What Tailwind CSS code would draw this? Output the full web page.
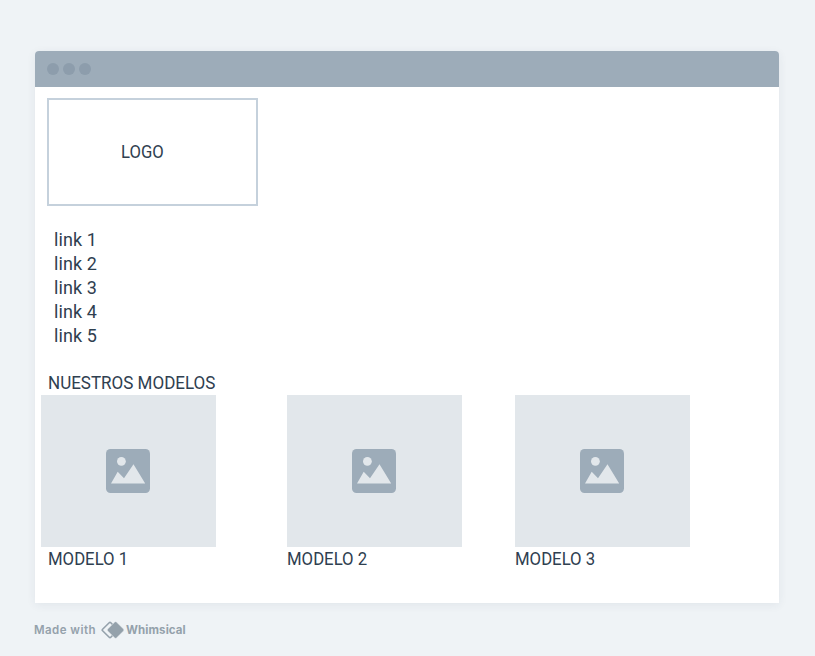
<!DOCTYPE html>
<html lang="es">
<head>
<meta charset="utf-8">
<title>Nuestros modelos</title>
<script src="https://cdn.jsdelivr.net/npm/@tailwindcss/browser@4"></script>
</head>
<body class="h-[656px] overflow-hidden bg-[#eff3f6] pl-[35px] pt-[51px] font-['Roboto','Liberation_Sans',sans-serif] text-[18px] leading-6 text-[#2f4050]">
<svg class="hidden">
  <symbol id="picture" viewBox="0 0 44 44">
    <rect width="44" height="44" rx="4.5" fill="#9dacb9"/>
    <circle cx="15.4" cy="12.3" r="4.4" fill="#e2e7eb"/>
    <path d="M5 34.5L11.7 22.7L18 29.3L27.5 15.3L39.2 34.5Z" fill="#e2e7eb"/>
  </symbol>
</svg>
<main class="flex h-[552px] w-[744px] flex-col rounded-t-[4px] bg-white shadow-[0_2px_10px_rgba(44,62,80,0.07)]">
  <header class="flex h-9 items-center gap-1 rounded-t-[4px] bg-[#9dacb9] pl-3">
    <span class="size-3 rounded-full bg-[#8d9dac]"></span>
    <span class="size-3 rounded-full bg-[#8d9dac]"></span>
    <span class="size-3 rounded-full bg-[#8d9dac]"></span>
  </header>
  <div class="ml-3 mt-[11px] flex h-[108px] w-[211px] items-center border-2 border-[#c5d1dc] pl-[72px]">
    <span class="inline-block origin-left scale-x-[0.925]">LOGO</span>
  </div>
  <nav class="ml-[19px] mt-[22px] flex flex-col items-start">
    <a class="tracking-[0.1px]">link 1</a>
    <a class="tracking-[0.1px]">link 2</a>
    <a class="tracking-[0.1px]">link 3</a>
    <a class="tracking-[0.1px]">link 4</a>
    <a class="tracking-[0.1px]">link 5</a>
  </nav>
  <h1 class="ml-[13px] mt-[23px] origin-left self-start whitespace-nowrap scale-x-[0.945]">NUESTROS MODELOS</h1>
  <section class="ml-1.5 flex">
    <figure class="mr-[71px] w-[175px]">
      <div class="flex h-[152px] items-start bg-[#e2e7eb] pl-[65px] pt-[54px]"><svg class="size-11"><use href="#picture"/></svg></div>
      <figcaption class="ml-[7px] w-fit origin-left scale-x-[0.93]">MODELO 1</figcaption>
    </figure>
    <figure class="mr-[53px] w-[175px]">
      <div class="flex h-[152px] items-start bg-[#e2e7eb] pl-[65px] pt-[54px]"><svg class="size-11"><use href="#picture"/></svg></div>
      <figcaption class="w-fit origin-left scale-x-[0.93]">MODELO 2</figcaption>
    </figure>
    <figure class="w-[175px]">
      <div class="flex h-[152px] items-start bg-[#e2e7eb] pl-[65px] pt-[54px]"><svg class="size-11"><use href="#picture"/></svg></div>
      <figcaption class="w-fit origin-left scale-x-[0.93]">MODELO 3</figcaption>
    </figure>
  </section>
</main>
<footer class="-ml-px mt-[18px] flex h-[18px] items-center font-['Inter','Liberation_Sans',sans-serif] text-[11.5px] font-semibold leading-[18px] text-[#94a1ab]">
  <span class="w-[66px] whitespace-nowrap tracking-[0.45px]">Made with</span>
  <svg class="h-[18px] w-[26px] shrink-0" viewBox="0 0 26 18">
    <path d="M9.2 1.8Q10 1 10.8 1.8L17.2 8.2Q18 9 17.2 9.8L10.8 16.2Q10 17 9.2 16.2L2.6 9.8Q1.8 9 2.6 8.2Z" fill="none" stroke="#94a1ab" stroke-width="1.6"/>
    <path d="M14.8 1.1Q15.6 .3 16.4 1.1L23.5 8.1Q24.4 9 23.5 9.9L16.4 16.9Q15.6 17.7 14.8 16.9L7.7 9.9Q6.8 9 7.7 8.1Z" fill="#94a1ab" stroke="#eff3f6" stroke-width=".4"/>
  </svg>
  <span class="font-bold tracking-[0.1px]">Whimsical</span>
</footer>
</body>
</html>
